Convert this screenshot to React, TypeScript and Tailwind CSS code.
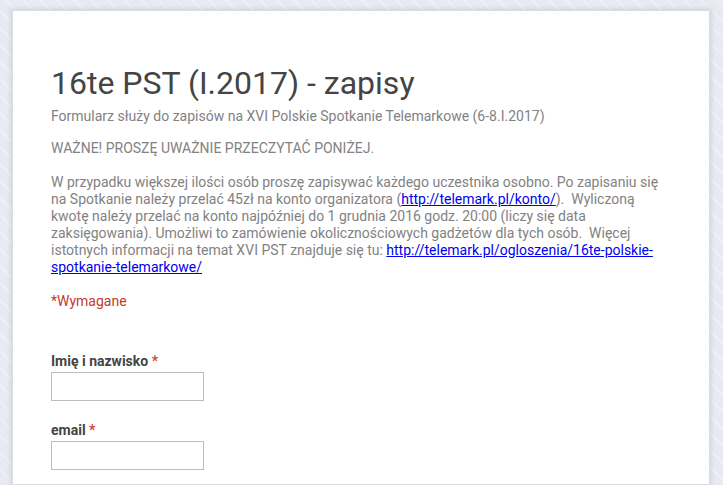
import React from 'react'

const font = { fontFamily: 'Roboto, "Noto Sans", sans-serif' }

function Field({ label }: { label: string }) {
  return (
    <div className="mb-[19px]">
      <div className="text-[14px] font-bold text-[#444] leading-[20px] mb-[1px]">
        {label} <span className="text-[#db4437]">*</span>
      </div>
      <input
        type="text"
        className="block w-[153px] h-[29px] border border-[#bdbdbd] bg-white outline-none"
      />
    </div>
  )
}

export default function App() {
  return (
    <div
      className="min-h-[485px] h-[485px] overflow-hidden bg-[#e7eaf2] bg-[repeating-linear-gradient(45deg,#e7eaf2_0px,#e7eaf2_10px,#eef0f6_10px,#eef0f6_12px)] pt-[10px] px-[12px] pr-[13px]"
      style={font}
    >
      <div className="bg-white h-full border border-[#dcdcdc] shadow-[0_0_4px_2px_rgba(0,0,0,0.08)] pl-[38px] pr-[40px] pt-[52px]">
        {/* Header */}
        <h1 className="text-[32px] leading-[40px] text-[#444] font-normal">16te PST (I.2017) - zapisy</h1>
        <p className="text-[14px] leading-[20px] text-[#828282] mt-[3px]">
          Formularz służy do zapisów na XVI Polskie Spotkanie Telemarkowe (6-8.I.2017)
        </p>
        <p className="text-[14px] leading-[17px] text-[#828282] mt-[14px]">WAŻNE! PROSZĘ UWAŻNIE PRZECZYTAĆ PONIŻEJ.</p>
        <p className="text-[14px] leading-[17px] text-[#828282] mt-[17px] w-[610px]">
          W przypadku większej ilości osób proszę zapisywać każdego uczestnika osobno. Po zapisaniu się na Spotkanie należy
          przelać 45zł na konto organizatora (
          <a href="#" className="text-[#0000ee] underline">
            http://telemark.pl/konto/
          </a>
          ).&nbsp; Wyliczoną kwotę należy przelać na konto najpóźniej do 1 grudnia 2016 godz. 20:00 (liczy się data
          zaksięgowania). Umożliwi to zamówienie okolicznościowych gadżetów dla tych osób.&nbsp; Więcej istotnych
          informacji na temat XVI PST znajduje się tu:{' '}
          <a href="#" className="text-[#0000ee] underline">
            http://telemark.pl/ogloszenia/16te-polskie-spotkanie-telemarkowe/
          </a>
        </p>
        <p className="text-[14px] leading-[17px] text-[#c53929] mt-[17px]">*Wymagane</p>

        {/* Questions */}
        <div className="mt-[41px]">
          <Field label="Imię i nazwisko" />
          <Field label="email" />
        </div>
      </div>
    </div>
  )
}
